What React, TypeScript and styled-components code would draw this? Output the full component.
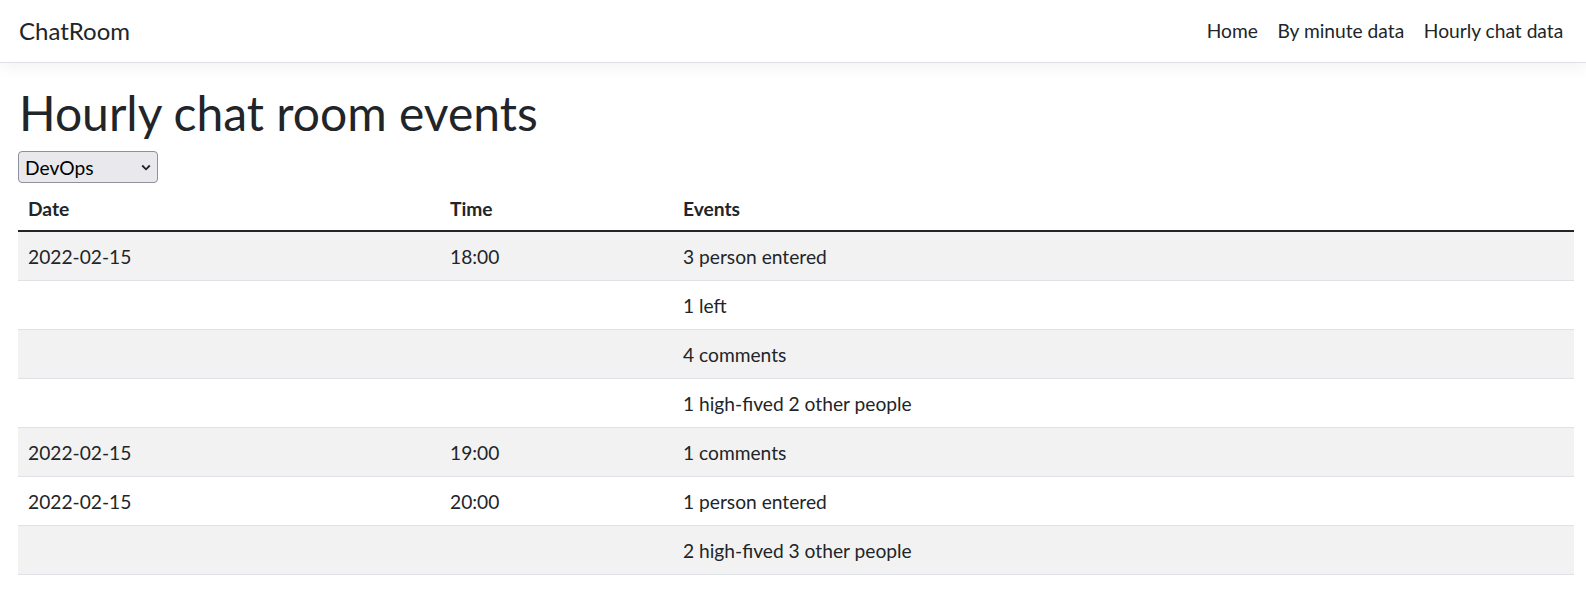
import styled, { createGlobalStyle } from "styled-components";

const GlobalStyle = createGlobalStyle`
  body {
    margin: 0;
    font-family: Lato, "Liberation Sans", sans-serif;
    font-size: 19.2px;
    line-height: 1.5;
    color: #212529;
    background: #fff;
  }
`;

const Navbar = styled.header`
  display: flex;
  justify-content: space-between;
  align-items: center;
  height: 62px;
  padding: 0 13px 0 19px;
  border-bottom: 1px solid #dee2e6;
  box-shadow: 0 4.8px 14.4px rgba(0, 0, 0, 0.05);
`;

const Brand = styled.a`
  font-size: 24px;
  line-height: 36px;
  color: #212529;
  text-decoration: none;
`;

const NavList = styled.nav`
  display: flex;
`;

const NavLink = styled.a`
  padding: 0 9.8px;
  line-height: 28.8px;
  color: #212529;
  text-decoration: none;
`;

const Main = styled.main`
  padding: 21px 12px 0 18px;
`;

const Title = styled.h1`
  margin: 0 0 9px 1px;
  font-size: 48px;
  font-weight: 400;
  line-height: 1.2;
`;

const SelectWrap = styled.div`
  position: relative;
  width: 140px;
  height: 32px;
`;

const RoomSelect = styled.select`
  appearance: none;
  display: block;
  width: 140px;
  height: 32px;
  padding: 2px 24px 0 6px;
  font-family: inherit;
  font-size: 19.2px;
  color: #000;
  background: #e9e9ed;
  border: 1px solid #8f8f9d;
  border-radius: 4px;
`;

const Chevron = styled.svg`
  position: absolute;
  right: 7px;
  top: 13px;
  width: 10px;
  height: 7px;
  pointer-events: none;
`;

const Table = styled.table`
  width: 100%;
  border-collapse: collapse;
  table-layout: fixed;
`;

const HeadCell = styled.th<{ $width?: number }>`
  ${({ $width }) => ($width ? `width: ${$width}px;` : "")}
  padding: 12px 10px 6.4px;
  text-align: left;
  font-weight: 700;
  line-height: 28.8px;
  border-bottom: 2px solid #212529;
`;

const BodyRow = styled.tr`
  border-bottom: 1px solid #dee2e6;
  &:nth-child(odd) {
    background: #f2f2f2;
  }
`;

const Cell = styled.td`
  padding: 11.4px 10px 7.8px;
  line-height: 28.8px;
`;

type EventRow = { date?: string; time?: string; event: string };

const rows: EventRow[] = [
  { date: "2022-02-15", time: "18:00", event: "3 person entered" },
  { event: "1 left" },
  { event: "4 comments" },
  { event: "1 high-fived 2 other people" },
  { date: "2022-02-15", time: "19:00", event: "1 comments" },
  { date: "2022-02-15", time: "20:00", event: "1 person entered" },
  { event: "2 high-fived 3 other people" },
];

export default function App() {
  return (
    <>
      <GlobalStyle />
      <Navbar>
        <Brand href="#">ChatRoom</Brand>
        <NavList>
          <NavLink href="#">Home</NavLink>
          <NavLink href="#">By minute data</NavLink>
          <NavLink href="#">Hourly chat data</NavLink>
        </NavList>
      </Navbar>
      <Main>
        <Title>Hourly chat room events</Title>
        <SelectWrap>
          <RoomSelect defaultValue="DevOps">
            <option>DevOps</option>
            <option>General</option>
          </RoomSelect>
          <Chevron viewBox="0 0 10 7">
            <path d="M1.2 1.5l3.8 3.8 3.8-3.8" fill="none" stroke="#222" strokeWidth="1.8" />
          </Chevron>
        </SelectWrap>
        <Table>
          <thead>
            <tr>
              <HeadCell $width={402}>Date</HeadCell>
              <HeadCell $width={213}>Time</HeadCell>
              <HeadCell>Events</HeadCell>
            </tr>
          </thead>
          <tbody>
            {rows.map((r, i) => (
              <BodyRow key={i}>
                <Cell>{r.date}</Cell>
                <Cell>{r.time}</Cell>
                <Cell>{r.event}</Cell>
              </BodyRow>
            ))}
          </tbody>
        </Table>
      </Main>
    </>
  );
}
